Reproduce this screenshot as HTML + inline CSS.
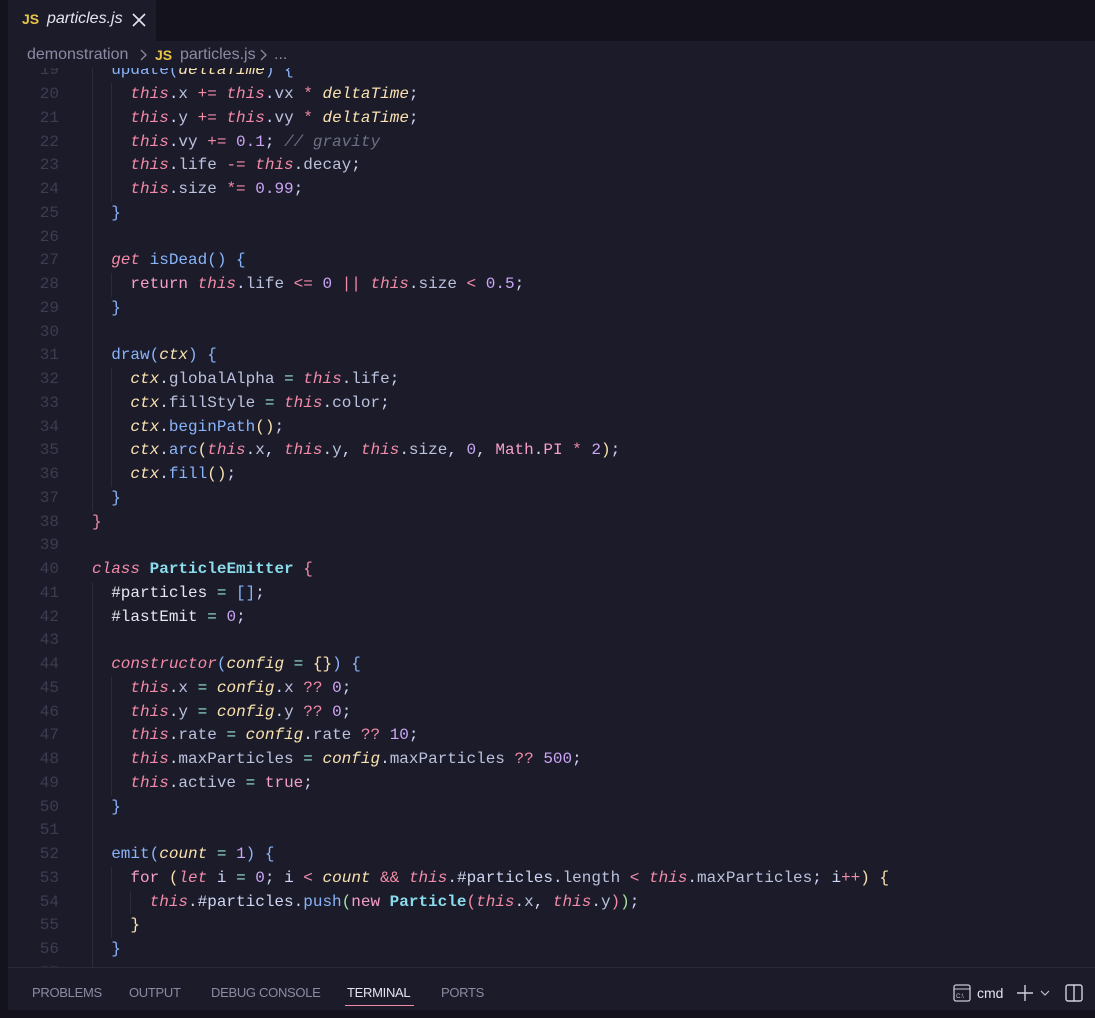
<!DOCTYPE html>
<html><head><meta charset="utf-8"><style>
body{margin:0;width:1095px;height:1018px;background:#1c1b29;overflow:hidden;font-family:"Liberation Sans",sans-serif;position:relative}
.tabbar{position:absolute;left:0;top:0;width:1095px;height:41px;background:#13121d}
.tab{position:absolute;left:8px;top:0;width:148px;height:41px;background:#1c1b29;color:#e4e4f0;font-size:16px}
.bc{position:absolute;left:0;top:41px;width:1095px;height:27px;background:#1c1b29;color:#8a8aa3;font-size:16px}
.js{color:#e8c547;font-weight:bold;font-size:14px}
.ed{position:absolute;left:8px;top:68px;width:1087px;height:899px;overflow:hidden;background:#1c1b29}
.code{position:absolute;left:0;top:-8.6px;width:1087px;font-family:"Liberation Mono",monospace;font-size:16px;}
.l{height:23.75px;line-height:23.75px;white-space:pre;position:relative;color:#cdd6f4}
.n{display:inline-block;width:51px;text-align:right;color:#3d3c52;margin-right:33px}
.t{color:#f38ba8;font-style:italic}.o{color:#f38ba8}.e{color:#94e2d5}.num{color:#cba6f7}
.p{color:#f9e2af;font-style:italic}.m{color:#89b4fa}.c{color:#6c7086;font-style:italic}
.k{color:#f38ba8;font-style:italic}.kw{color:#f5a0c8}.cl{color:#89dceb;font-weight:bold}
.b1{color:#f38ba8}.b2{color:#89b4fa}.b3{color:#f9e2af}.b4{color:#a6e3a1}.pr{color:#bac2de}
.g{position:absolute;width:1px;background:#2c2b3c}
.panel{position:absolute;left:8px;top:967px;width:1087px;height:43px;background:#1c1b29;border-top:1px solid #2a2a3a}
.pt{position:absolute;top:17px;font-size:13px;letter-spacing:-0.3px;color:#8a8aa3}
</style></head><body>
<div class="tabbar"><div class="tab"><span class="js" style="position:absolute;left:14px;top:11px">JS</span><span style="position:absolute;left:39px;top:10px;font-style:italic">particles.js</span>
<svg style="position:absolute;left:124px;top:13px" width="14" height="14" viewBox="0 0 14 14"><path d="M1 1L13 13M13 1L1 13" stroke="#e4e4f0" stroke-width="1.6"/></svg></div></div>
<div class="bc"><span style="position:absolute;left:27px;top:5px">demonstration</span>
<svg style="position:absolute;left:140px;top:8px" width="8" height="12"><path d="M1 1L6 6L1 11" stroke="#8a8aa3" fill="none" stroke-width="1.3"/></svg>
<span class="js" style="position:absolute;left:155px;top:6px">JS</span><span style="position:absolute;left:180px;top:5px">particles.js</span>
<svg style="position:absolute;left:260px;top:8px" width="8" height="12"><path d="M1 1L6 6L1 11" stroke="#8a8aa3" fill="none" stroke-width="1.3"/></svg>
<span style="position:absolute;left:274px;top:5px">...</span></div>
<div class="ed">
<div class="code">
<div class="g" style="left:84px;top:0;height:451.25px"></div>
<div class="g" style="left:84px;top:522.5px;height:400px"></div>
<div class="g" style="left:103px;top:23.75px;height:118.75px"></div>
<div class="g" style="left:103px;top:213.75px;height:23.75px"></div>
<div class="g" style="left:103px;top:308.75px;height:118.75px"></div>
<div class="g" style="left:103px;top:617.5px;height:118.75px"></div>
<div class="g" style="left:103px;top:807.5px;height:71.25px"></div>
<div class="g" style="left:122px;top:831.25px;height:23.75px"></div>
<div class="l"><span class="n">19</span>  <span class="m">update</span><span class="b2">(</span><span class="p">deltaTime</span><span class="b2">)</span> <span class="b2">{</span></div>
<div class="l"><span class="n">20</span>    <span class="t">this</span>.<span class="pr">x</span> <span class="o">+=</span> <span class="t">this</span>.<span class="pr">vx</span> <span class="o">*</span> <span class="p">deltaTime</span>;</div>
<div class="l"><span class="n">21</span>    <span class="t">this</span>.<span class="pr">y</span> <span class="o">+=</span> <span class="t">this</span>.<span class="pr">vy</span> <span class="o">*</span> <span class="p">deltaTime</span>;</div>
<div class="l"><span class="n">22</span>    <span class="t">this</span>.<span class="pr">vy</span> <span class="o">+=</span> <span class="num">0.1</span>; <span class="c">// gravity</span></div>
<div class="l"><span class="n">23</span>    <span class="t">this</span>.<span class="pr">life</span> <span class="o">-=</span> <span class="t">this</span>.<span class="pr">decay</span>;</div>
<div class="l"><span class="n">24</span>    <span class="t">this</span>.<span class="pr">size</span> <span class="o">*=</span> <span class="num">0.99</span>;</div>
<div class="l"><span class="n">25</span>  <span class="b2">}</span></div>
<div class="l"><span class="n">26</span></div>
<div class="l"><span class="n">27</span>  <span class="k">get</span> <span class="m">isDead</span><span class="b2">()</span> <span class="b2">{</span></div>
<div class="l"><span class="n">28</span>    <span class="kw">return</span> <span class="t">this</span>.<span class="pr">life</span> <span class="o">&lt;=</span> <span class="num">0</span> <span class="o">||</span> <span class="t">this</span>.<span class="pr">size</span> <span class="o">&lt;</span> <span class="num">0.5</span>;</div>
<div class="l"><span class="n">29</span>  <span class="b2">}</span></div>
<div class="l"><span class="n">30</span></div>
<div class="l"><span class="n">31</span>  <span class="m">draw</span><span class="b2">(</span><span class="p">ctx</span><span class="b2">)</span> <span class="b2">{</span></div>
<div class="l"><span class="n">32</span>    <span class="p">ctx</span>.<span class="pr">globalAlpha</span> <span class="e">=</span> <span class="t">this</span>.<span class="pr">life</span>;</div>
<div class="l"><span class="n">33</span>    <span class="p">ctx</span>.<span class="pr">fillStyle</span> <span class="e">=</span> <span class="t">this</span>.<span class="pr">color</span>;</div>
<div class="l"><span class="n">34</span>    <span class="p">ctx</span>.<span class="m">beginPath</span><span class="b3">()</span>;</div>
<div class="l"><span class="n">35</span>    <span class="p">ctx</span>.<span class="m">arc</span><span class="b3">(</span><span class="t">this</span>.<span class="pr">x</span>, <span class="t">this</span>.<span class="pr">y</span>, <span class="t">this</span>.<span class="pr">size</span>, <span class="num">0</span>, <span class="kw">Math</span>.<span class="kw">PI</span> <span class="o">*</span> <span class="num">2</span><span class="b3">)</span>;</div>
<div class="l"><span class="n">36</span>    <span class="p">ctx</span>.<span class="m">fill</span><span class="b3">()</span>;</div>
<div class="l"><span class="n">37</span>  <span class="b2">}</span></div>
<div class="l"><span class="n">38</span><span class="b1">}</span></div>
<div class="l"><span class="n">39</span></div>
<div class="l"><span class="n">40</span><span class="k">class</span> <span class="cl">ParticleEmitter</span> <span class="b1">{</span></div>
<div class="l"><span class="n">41</span>  <span style="color:#e6e6f0">#particles</span> <span class="e">=</span> <span class="b2">[]</span>;</div>
<div class="l"><span class="n">42</span>  <span style="color:#e6e6f0">#lastEmit</span> <span class="e">=</span> <span class="num">0</span>;</div>
<div class="l"><span class="n">43</span></div>
<div class="l"><span class="n">44</span>  <span class="k">constructor</span><span class="b2">(</span><span class="p">config</span> <span class="e">=</span> <span class="b3">{}</span><span class="b2">)</span> <span class="b2">{</span></div>
<div class="l"><span class="n">45</span>    <span class="t">this</span>.<span class="pr">x</span> <span class="e">=</span> <span class="p">config</span>.<span class="pr">x</span> <span class="o">??</span> <span class="num">0</span>;</div>
<div class="l"><span class="n">46</span>    <span class="t">this</span>.<span class="pr">y</span> <span class="e">=</span> <span class="p">config</span>.<span class="pr">y</span> <span class="o">??</span> <span class="num">0</span>;</div>
<div class="l"><span class="n">47</span>    <span class="t">this</span>.<span class="pr">rate</span> <span class="e">=</span> <span class="p">config</span>.<span class="pr">rate</span> <span class="o">??</span> <span class="num">10</span>;</div>
<div class="l"><span class="n">48</span>    <span class="t">this</span>.<span class="pr">maxParticles</span> <span class="e">=</span> <span class="p">config</span>.<span class="pr">maxParticles</span> <span class="o">??</span> <span class="num">500</span>;</div>
<div class="l"><span class="n">49</span>    <span class="t">this</span>.<span class="pr">active</span> <span class="e">=</span> <span class="kw">true</span>;</div>
<div class="l"><span class="n">50</span>  <span class="b2">}</span></div>
<div class="l"><span class="n">51</span></div>
<div class="l"><span class="n">52</span>  <span class="m">emit</span><span class="b2">(</span><span class="p">count</span> <span class="e">=</span> <span class="num">1</span><span class="b2">)</span> <span class="b2">{</span></div>
<div class="l"><span class="n">53</span>    <span class="kw">for</span> <span class="b3">(</span><span class="k">let</span> i <span class="e">=</span> <span class="num">0</span>; i <span class="o">&lt;</span> <span class="p">count</span> <span class="o">&amp;&amp;</span> <span class="t">this</span>.#particles.<span class="pr">length</span> <span class="o">&lt;</span> <span class="t">this</span>.<span class="pr">maxParticles</span>; i<span class="o">++</span><span class="b3">)</span> <span class="b3">{</span></div>
<div class="l"><span class="n">54</span>      <span class="t">this</span>.#particles.<span class="m">push</span><span class="b4">(</span><span class="kw">new</span> <span class="cl">Particle</span><span class="b1">(</span><span class="t">this</span>.<span class="pr">x</span>, <span class="t">this</span>.<span class="pr">y</span><span class="b1">)</span><span class="b4">)</span>;</div>
<div class="l"><span class="n">55</span>    <span class="b3">}</span></div>
<div class="l"><span class="n">56</span>  <span class="b2">}</span></div>
<div class="l"><span class="n">57</span></div>
</div></div>
<div style="position:absolute;left:0;top:316px;width:6px;height:27px;background:#8a3d5c"></div>
<div class="panel">
<span class="pt" style="left:24px">PROBLEMS</span><span class="pt" style="left:121px">OUTPUT</span><span class="pt" style="left:203px">DEBUG CONSOLE</span>
<span class="pt" style="left:339px;color:#e4e4f0">TERMINAL</span><div style="position:absolute;left:337px;top:37px;width:69px;height:1px;background:#f38ba8"></div>
<span class="pt" style="left:433px">PORTS</span>
<svg style="position:absolute;left:945px;top:16px" width="18" height="18" viewBox="0 0 18 18"><rect x="1" y="1" width="16" height="16" rx="2" fill="none" stroke="#c8c8d8" stroke-width="1.3"/><path d="M1 5H17" stroke="#c8c8d8"/><text x="3" y="14" font-size="6" fill="#c8c8d8" font-family="Liberation Sans">C:\</text></svg>
<span style="position:absolute;left:969px;top:17px;font-size:14px;color:#e4e4f0">cmd</span>
<svg style="position:absolute;left:1008px;top:16px" width="18" height="18"><path d="M9 1V17M1 9H17" stroke="#d0d0e0" stroke-width="1.4"/></svg>
<svg style="position:absolute;left:1032px;top:21px" width="10" height="8"><path d="M1 2L5 6L9 2" stroke="#c0c0d0" fill="none" stroke-width="1.2"/></svg>
<svg style="position:absolute;left:1057px;top:16px" width="18" height="18"><rect x="1" y="1" width="16" height="16" rx="2" fill="none" stroke="#d0d0e0" stroke-width="1.4"/><path d="M9 1V17" stroke="#d0d0e0" stroke-width="1.4"/></svg>
</div>
<div style="position:absolute;left:0;top:1010px;width:1095px;height:8px;background:#13121d"></div>
<div style="position:absolute;left:0;top:41px;width:8px;height:969px;background:#13121d"></div>
</body></html>
